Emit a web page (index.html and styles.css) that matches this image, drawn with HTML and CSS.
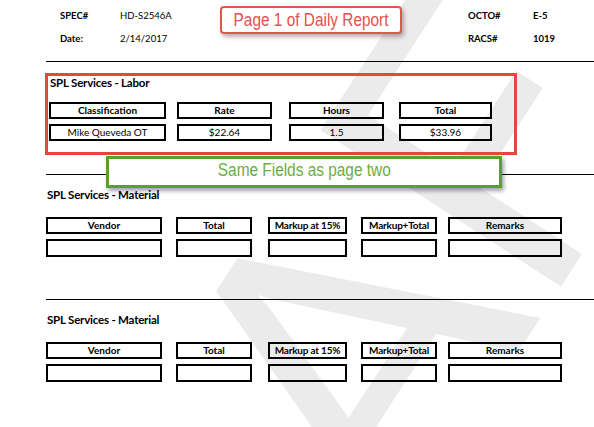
FILE: index.html
```html
<!DOCTYPE html>
<html lang="en">
<head>
<meta charset="utf-8">
<title>Daily Report</title>
<link rel="stylesheet" href="styles.css">
</head>
<body>
<div class="page">
  <div class="watermark" aria-hidden="true">DRAFT</div>

  <header class="info">
    <dl class="info-block info-left">
      <dt>SPEC#</dt><dd>HD-S2546A</dd>
      <dt>Date:</dt><dd>2/14/2017</dd>
    </dl>
    <dl class="info-block info-right">
      <dt>OCTO#</dt><dd>E-5</dd>
      <dt>RACS#</dt><dd>1019</dd>
    </dl>
  </header>

  <hr class="rule">

  <section class="labor">
    <h2 class="sec-title">SPL Services - Labor</h2>
    <div class="labor-grid">
      <div class="cell head l1">Classification</div>
      <div class="cell head l2">Rate</div>
      <div class="cell head l3">Hours</div>
      <div class="cell head l4">Total</div>
      <div class="cell val l1">Mike Queveda OT</div>
      <div class="cell val l2">$22.64</div>
      <div class="cell val l3">1.5</div>
      <div class="cell val l4">$33.96</div>
    </div>
  </section>

  <hr class="rule rule-mid">

  <section class="material">
    <h2 class="sec-title">SPL Services - Material</h2>
    <div class="mat-grid">
      <div class="cell head m1">Vendor</div>
      <div class="cell head m2">Total</div>
      <div class="cell head m3 tight">Markup at 15%</div>
      <div class="cell head m4 tight">Markup+Total</div>
      <div class="cell head m5">Remarks</div>
      <div class="cell val m1"></div>
      <div class="cell val m2"></div>
      <div class="cell val m3"></div>
      <div class="cell val m4"></div>
      <div class="cell val m5"></div>
    </div>
  </section>

  <hr class="rule rule-low">

  <section class="material">
    <h2 class="sec-title">SPL Services - Material</h2>
    <div class="mat-grid">
      <div class="cell head m1">Vendor</div>
      <div class="cell head m2">Total</div>
      <div class="cell head m3 tight">Markup at 15%</div>
      <div class="cell head m4 tight">Markup+Total</div>
      <div class="cell head m5">Remarks</div>
      <div class="cell val m1"></div>
      <div class="cell val m2"></div>
      <div class="cell val m3"></div>
      <div class="cell val m4"></div>
      <div class="cell val m5"></div>
    </div>
  </section>

  <div class="callout callout-red"><span class="callout-text">Page 1 of Daily Report</span></div>
  <div class="callout callout-green"><span class="callout-text">Same Fields as page two</span></div>
</div>
</body>
</html>
```

FILE: styles.css
```css
html, body {
  margin: 0;
  padding: 0;
  background: #ffffff;
}

.page {
  position: relative;
  width: 594px;
  height: 427px;
  overflow: hidden;
  font-family: "Lato", "Open Sans", sans-serif;
  color: #000;
}

.page > *:not(.watermark):not(.callout) {
  position: relative;
  z-index: 1;
}

/* watermark */
.watermark {
  position: absolute;
  left: 312px;
  top: 385px;
  transform: translate(-50%, -50%) rotate(-57deg);
  font-family: "Lato", sans-serif;
  font-size: 400px;
  line-height: 1;
  color: #ebebeb;
  white-space: nowrap;
  z-index: 0;
}

/* header info */
.info {
  display: flex;
  align-items: flex-start;
  height: 61px;
  padding-top: 10px;
  box-sizing: border-box;
}

.info-block {
  display: grid;
  row-gap: 11px;
  margin: 0;
  font-size: 9.5px;
  line-height: 12px;
}

.info-block dt {
  font-weight: 700;
}

.info-block dd {
  margin: 0;
}

.info-left {
  margin-left: 60px;
  grid-template-columns: 60px auto;
}

.info-right {
  margin-left: auto;
  width: 126px;
  grid-template-columns: 65px auto;
}

.info-right dd {
  font-weight: 700;
}

/* rules */
.rule {
  display: block;
  height: 1px;
  border: 0;
  margin: 0 0 0 46px;
  background: #000;
}

.rule-mid {
  margin-top: 19px;
}

.rule-low {
  margin-top: 42px;
}

/* section titles */
.sec-title {
  margin: 0;
  font-size: 11.5px;
  line-height: 14px;
  font-weight: 700;
  letter-spacing: -0.2px;
}

/* labor */
.labor {
  margin: 11px 0 0 45px;
  width: 472px;
  height: 82px;
  box-sizing: border-box;
  border: 3px solid #e5473f;
  padding-left: 2px;
}

.labor-grid {
  display: grid;
  grid-template-columns: 117px 11px 95px 17px 95px 15px 93px;
  grid-template-rows: 17px 17px;
  row-gap: 5px;
  margin: 12px 0 0 -1px;
}

.l1 { grid-column: 1; }
.l2 { grid-column: 3; }
.l3 { grid-column: 5; }
.l4 { grid-column: 7; }

/* material */
.material {
  margin-left: 46px;
}

.material .sec-title {
  margin-top: 13px;
  margin-left: 1px;
}

.mat-grid {
  display: grid;
  grid-template-columns: 116px 14px 76px 16px 79px 14px 76px 11px 114px;
  grid-template-rows: 17px 18px;
  row-gap: 5px;
  margin-top: 15px;
}

.m1 { grid-column: 1; }
.m2 { grid-column: 3; }
.m3 { grid-column: 5; }
.m4 { grid-column: 7; }
.m5 { grid-column: 9; }

/* cells */
.cell {
  box-sizing: border-box;
  border: 2px solid #000;
  text-align: center;
  font-size: 10px;
  line-height: 13px;
  white-space: nowrap;
  overflow: hidden;
}

.head {
  font-weight: 700;
  grid-row: 1;
}

.val {
  font-weight: 400;
  grid-row: 2;
}

.tight {
  letter-spacing: -0.2px;
}

/* callouts */
.callout {
  position: absolute;
  box-sizing: border-box;
  background: #ffffff;
  display: flex;
  align-items: center;
  justify-content: center;
  font-family: "Liberation Sans", Arial, sans-serif;
  font-size: 17.5px;
  z-index: 2;
}

.callout-text {
  display: inline-block;
  transform: scaleX(0.88);
  white-space: nowrap;
}

.callout-red {
  left: 220px;
  top: 6px;
  width: 182px;
  height: 28px;
  border: 2px solid #e5534f;
  border-radius: 4px;
  box-shadow: 2px 3px 4px rgba(0, 0, 0, 0.3);
  color: #e84f4c;
}

.callout-green {
  left: 106px;
  top: 156px;
  width: 396px;
  height: 32px;
  border: 3px solid #5c9e30;
  box-shadow: 2px 3px 4px rgba(0, 0, 0, 0.35);
  color: #6aae3c;
  padding-bottom: 3px;
}
```
